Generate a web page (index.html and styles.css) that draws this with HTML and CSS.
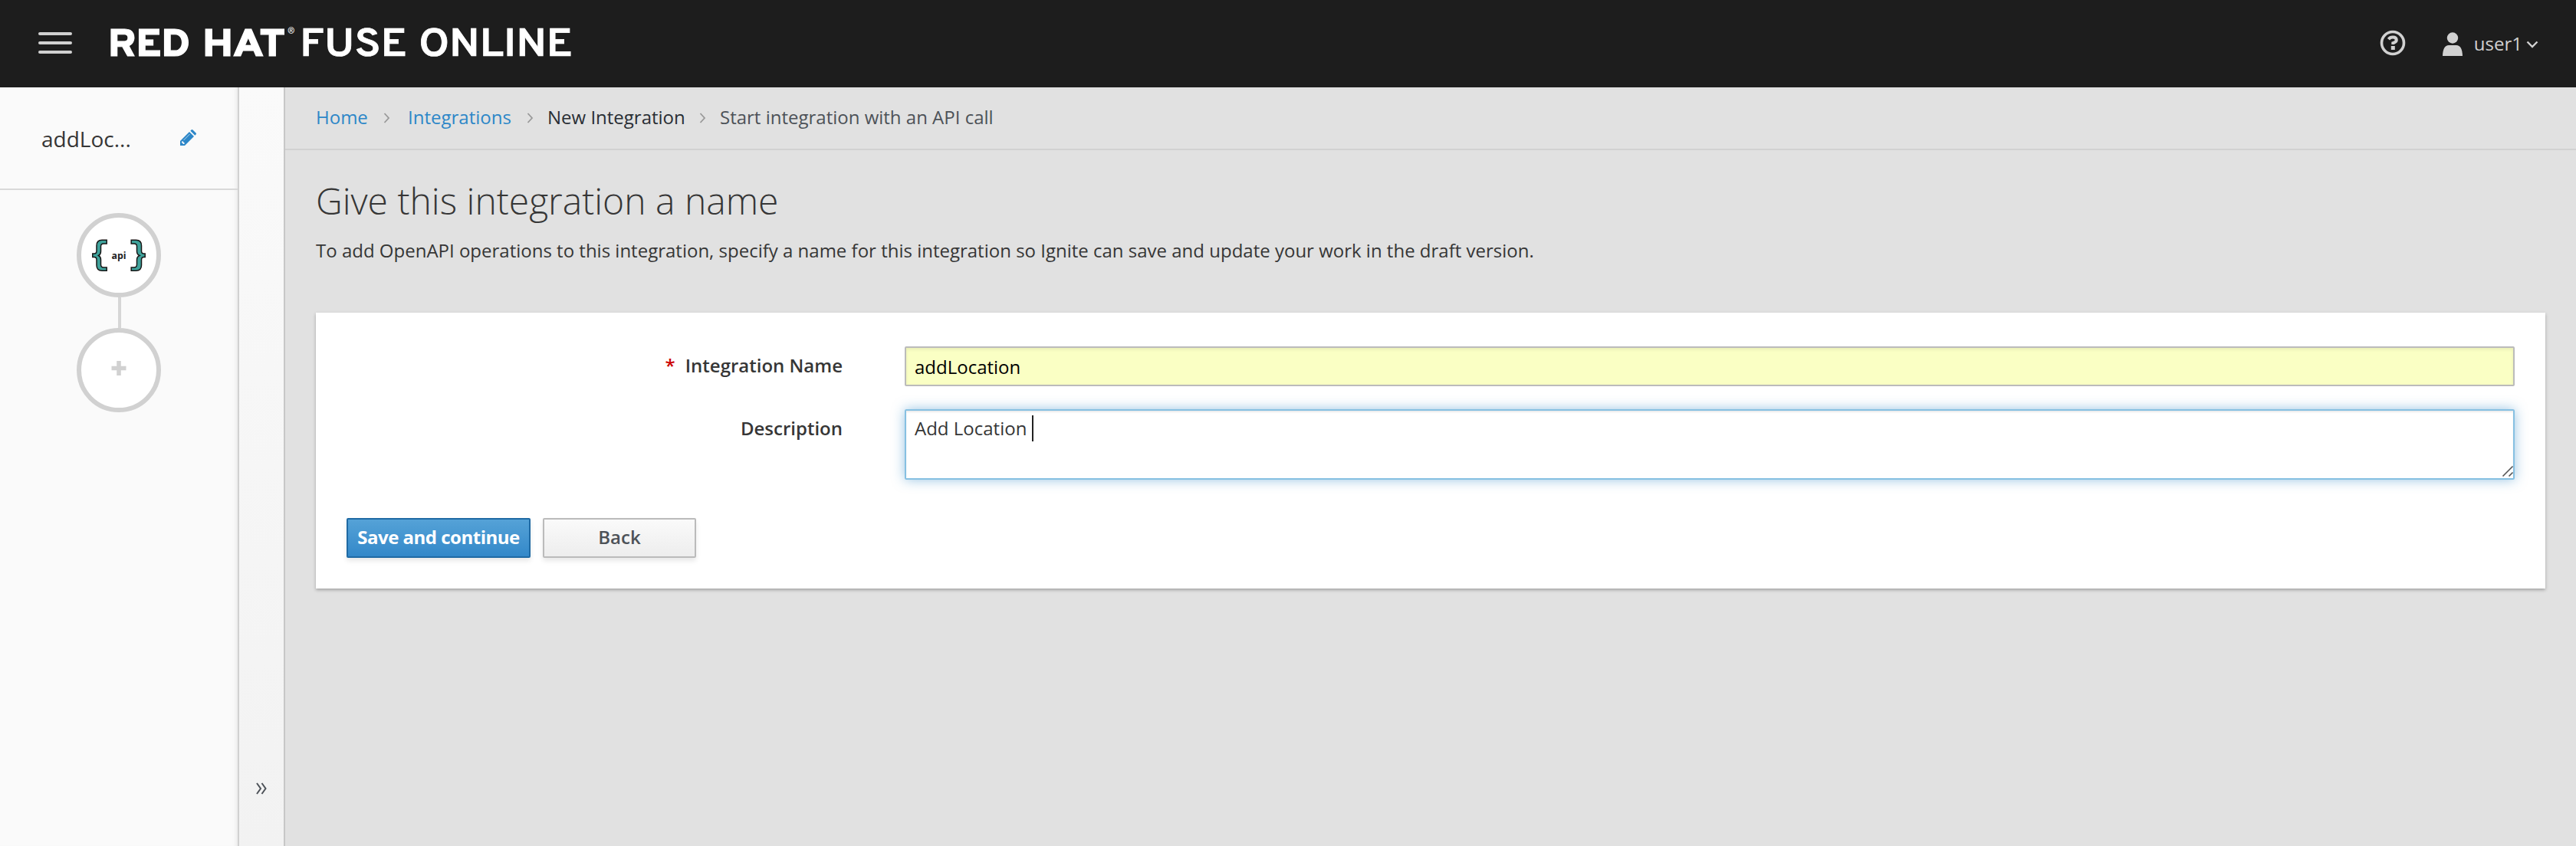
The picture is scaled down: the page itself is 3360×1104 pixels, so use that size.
FILE: index.html
```html
<!DOCTYPE html>
<html lang="en">
<head>
<meta charset="utf-8">
<title>Red Hat Fuse Online</title>
<link rel="stylesheet" href="styles.css">
</head>
<body>
<header class="masthead">
  <button class="menu-toggle" aria-label="Menu"><span></span><span></span><span></span></button>
  <svg class="brand" width="620" height="60" viewBox="0 0 620 60">
    <g fill="#fff" font-family="Overpass, 'Open Sans', sans-serif">
      <text class="brand-bold" x="-1" y="45" textLength="107" lengthAdjust="spacingAndGlyphs">RED</text>
      <text class="brand-bold" x="122" y="45" textLength="108" lengthAdjust="spacingAndGlyphs">HAT</text>
      <text class="brand-reg" x="233" y="16">®</text>
      <text class="brand-semi" x="249" y="45" textLength="140" lengthAdjust="spacingAndGlyphs">FUSE</text>
      <text class="brand-semi" x="404" y="45" textLength="201" lengthAdjust="spacingAndGlyphs">ONLINE</text>
    </g>
  </svg>
  <nav class="utilities">
    <svg class="help" width="34" height="34" viewBox="0 0 34 34"><circle cx="17" cy="17" r="14.5" fill="none" stroke="#d1d1d1" stroke-width="3.6"/><path d="M11.5 12.2Q13.4 9.6 17 9.6Q21.800 9.600 21.800 13.300Q21.800 16 17.300 17.200V19" fill="none" stroke="#d1d1d1" stroke-width="4"/><rect x="14.800" y="21" width="5" height="5" fill="#d1d1d1"/></svg>
    <svg class="person" width="26" height="32" viewBox="0 0 26 32"><circle cx="13" cy="7.500" r="7.200" fill="#d1d1d1"/><path d="M0 31Q.5 17 8 17H18Q25.500 17 26 31Z" fill="#d1d1d1"/></svg>
    <span class="username">user1</span>
    <svg class="caret" width="16" height="10" viewBox="0 0 16 10"><path d="M1.500 1.500L8 8L14.500 1.500" fill="none" stroke="#d1d1d1" stroke-width="2.400"/></svg>
  </nav>
</header>
<div class="workspace">
  <aside class="sidebar">
    <div class="flow-title">
      <span>addLoc...</span>
      <svg width="22" height="22" viewBox="0 0 22 22"><path d="M0 21V15L12 3L18 9L6 21Z" fill="#2d87c8"/><path d="M13.300 1.700L14.500.5Q15.500-.3 16.500.5L20.500 4.500Q21.500 5.500 20.500 6.500L19.300 7.700Z" fill="#2d87c8"/><path d="M4.500 14L12.500 6" stroke="#b8dbf2" stroke-width="1"/><path d="M2 16V17.500H3.500V19H5L6 18L3 15Z" fill="#fafafa"/></svg>
    </div>
    <div class="flow">
      <div class="step">
        <svg width="98" height="98" viewBox="0 0 98 98"><g fill="#3fa29b" stroke="#171717" stroke-width="1.500"><path d="M33.200 29.200V34H29Q25.500 34 25.500 37.500V44Q25.500 48 22.500 49.500Q25.500 51 25.500 55V61Q25.500 65 29 65H33.200V69.200H27Q20 69.200 20 62V55Q20 51.500 17 51.500H14.800V47H17Q20 47 20 43.500V36.500Q20 29.200 27 29.200Z"/><path d="M65.200 29.200V34H69Q72.500 34 72.500 37.500V44Q72.500 48 76 49.500Q72.500 51 72.500 55V61Q72.500 65 69 65H65.200V69.200H71.500Q78.500 69.200 78.500 62V55Q78.500 51.500 81.500 51.500H83.200V47H81.500Q78.500 47 78.500 43.500V36.500Q78.500 29.200 71.500 29.200Z"/></g><text class="api" x="39.500" y="53.500" textLength="19" lengthAdjust="spacingAndGlyphs">api</text></svg>
      </div>
      <div class="connector"></div>
      <div class="step"><svg width="98" height="98" viewBox="0 0 98 98"><path d="M49 37V56M39.500 46.500H58.500" stroke="#d1d1d1" stroke-width="5.500"/></svg></div>
    </div>
  </aside>
  <div class="rail"><svg width="14" height="16" viewBox="0 0 14 16"><path d="M1 1L6 8L1 15M7.500 1L12.500 8L7.500 15" fill="none" stroke="#4d5258" stroke-width="2"/></svg></div>
  <main class="content">
    <nav class="breadcrumb">
      <a class="home">Home</a><svg width="9" height="14" viewBox="0 0 9 14"><path d="M1.500 1L7 7L1.500 13"/></svg>
      <a class="integrations">Integrations</a><svg width="9" height="14" viewBox="0 0 9 14"><path d="M1.500 1L7 7L1.500 13"/></svg>
      <span class="current">New Integration</span><svg width="9" height="14" viewBox="0 0 9 14"><path d="M1.500 1L7 7L1.500 13"/></svg>
      <span class="last">Start integration with an API call</span>
    </nav>
    <h1>Give this integration a name</h1>
    <p class="intro">To add OpenAPI operations to this integration, specify a name for this integration so Ignite can save and update your work in the draft version.</p>
    <section class="card">
      <div class="row"><div class="label"><span class="required">*</span>Integration Name</div><div class="input">addLocation</div></div>
      <div class="row"><div class="label">Description</div><div class="textarea"><span>Add Location</span><i class="cursor"></i><svg class="grip" width="14" height="14" viewBox="0 0 14 14"><path d="M.5 13.500L13.500.5M8.500 13.500L13.500 8.500" stroke="#555" stroke-width="1.600"/></svg></div></div>
      <div class="actions"><button class="btn primary">Save and continue</button><button class="btn">Back</button></div>
    </section>
  </main>
</div>
</body>
</html>
```
FILE: styles.css
```css
* { box-sizing: border-box; }
body { margin: 0; height: 1104px; overflow: hidden; font: 24px/40px "Open Sans", sans-serif; color: #363636; background: #e1e1e1; }
svg { display: block; flex: none; overflow: visible; }
.masthead { height: 114px; background: #1d1d1d; display: flex; align-items: flex-start; }
.menu-toggle { margin: 42px 0 0 50px; padding: 0; border: 0; background: none; width: 44px; display: flex; flex-direction: column; gap: 8px; }
.menu-toggle span { height: 4px; border-radius: 2px; background: #d1d1d1; }
.brand { margin: 28px 0 0 48px; }
.brand-bold { font-size: 50px; font-weight: 800; stroke: #fff; stroke-width: 1.2px; }
.brand-semi { font-size: 51px; font-weight: 600; stroke: #fff; stroke-width: .7px; }
.brand-reg { font-size: 11px; }
.utilities { margin-left: auto; padding-right: 49px; display: flex; color: #d1d1d1; }
.help { margin-top: 39px; }
.person { margin: 42px 0 0 48px; }
.username { margin: 37px 0 0 15px; }
.caret { margin: 53px 0 0 5px; }
.workspace { display: flex; height: 990px; }
.sidebar { width: 312px; background: #fafafa; border-right: 2px solid #d1d1d1; box-shadow: inset -6px 0 6px -5px #00000018; }
.flow-title { height: 134px; border-bottom: 2px solid #d9d9d9; display: flex; justify-content: space-between; padding: 47px 53px 0 54px; font-size: 28px; }
.flow-title svg { margin-top: 8px; }
.flow { display: flex; flex-direction: column; align-items: center; padding-top: 30px; }
.step { width: 110px; height: 110px; border: 6px solid #d1d1d1; border-radius: 50%; background: #fff; }
.connector { width: 4px; height: 40px; background: #d6d6d6; margin-left: 2px; }
.api { font: 700 13px "Open Sans", sans-serif; fill: #222; }
.rail { width: 60px; border-right: 2px solid #c7c7c7; background: linear-gradient(#fafafa, #f2f2f2); padding: 907px 0 0 22px; }
.content { flex: 1; min-width: 0; }
.breadcrumb { height: 82px; border-bottom: 2px solid #d1d1d1; display: flex; padding: 19px 0 0 40px; }
.breadcrumb a { color: #2d87c8; }
.breadcrumb svg { margin-top: 14px; fill: none; stroke: #999; stroke-width: 1.8; }
.home { width: 88px; }
.integrations { margin-left: 23px; width: 155px; }
.current { margin-left: 18px; width: 198px; color: #292e34; }
.last { margin-left: 18px; color: #4d5258; }
h1 { margin: 36px 0 0 40px; font-size: 48px; line-height: 60px; font-weight: 300; }
.intro { margin: 15px 0 0 40px; line-height: 40px; }
.card { margin: 61px 40px 0 40px; height: 360px; background: #fff; padding: 44px 40px 0; box-shadow: 0 2px 4px #00000048; }
.row { display: flex; margin-bottom: 30px; }
.label { width: 728px; padding: 5px 81px 0 0; text-align: right; font-weight: 600; }
.required { color: #c00; margin-right: 13px; }
.input, .textarea { flex: 1; border: 2px solid #bbb; border-radius: 2px; padding: 5px 11px; }
.input { height: 52px; color: #000; background: #faffc4; box-shadow: inset 0 2px 4px #00000014; }
.textarea { position: relative; height: 92px; display: flex; padding-top: 3px; border-color: #86c0e2; box-shadow: inset 0 2px 2px #00000013, 0 0 16px #2d87c880; }
.cursor { width: 2px; height: 34px; margin: 3px 0 0 7px; background: #222; }
.grip { position: absolute; right: 0; bottom: 2px; }
.actions { display: flex; gap: 16px; padding-top: 20px; }
.btn { width: 200px; height: 52px; border: 2px solid #bbb; border-radius: 2px; padding: 0 0 2px; font: 600 24px/44px "Open Sans", sans-serif; color: #4d5258; background: linear-gradient(#fafafa, #ededed); box-shadow: 0 4px 6px #00000018; }
.primary { width: 240px; color: #fff; font-weight: 700; letter-spacing: -.5px; border-color: #1f6aa4; background: linear-gradient(#55a2d7, #3388c9); }
```
